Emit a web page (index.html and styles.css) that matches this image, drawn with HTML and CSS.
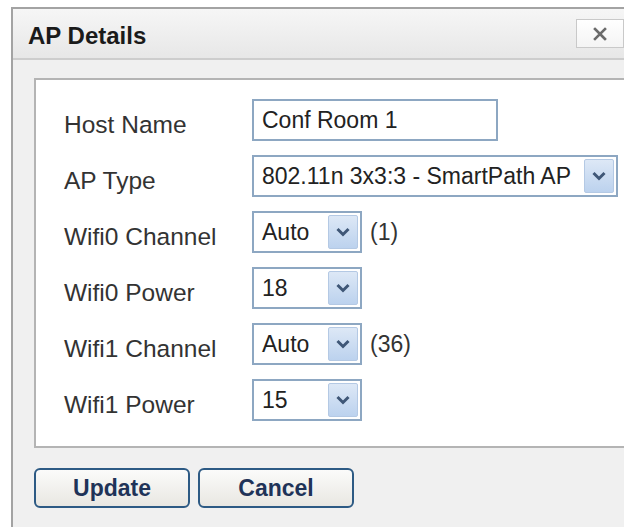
FILE: index.html
```html
<!DOCTYPE html>
<html lang="en">
<head>
<meta charset="utf-8">
<title>AP Details</title>
<link rel="stylesheet" href="styles.css">
</head>
<body>
<div class="dialog">
  <div class="dialog-header">
    <span class="dialog-title">AP Details</span>
    <button class="close-btn" type="button" aria-label="Close">
      <svg width="14" height="14" viewBox="0 0 14 14"><path d="M2 2 L12 12 M12 2 L2 12" stroke="#6b6b6b" stroke-width="2.6" stroke-linecap="square"/></svg>
    </button>
  </div>
  <div class="dialog-body">
    <div class="panel">
      <div class="row">
        <span class="label">Host Name</span>
        <div class="field text-field">Conf Room 1</div>
      </div>
      <div class="row">
        <span class="label">AP Type</span>
        <div class="field select wide">
          <span class="value">802.11n 3x3:3 - SmartPath AP</span>
          <span class="arrow"><svg width="16" height="10" viewBox="0 0 16 10"><path d="M2.5 2 L8 7.5 L13.5 2" fill="none" stroke="#3f5777" stroke-width="3"/></svg></span>
        </div>
      </div>
      <div class="row">
        <span class="label">Wifi0 Channel</span>
        <div class="field select small">
          <span class="value">Auto</span>
          <span class="arrow"><svg width="16" height="10" viewBox="0 0 16 10"><path d="M2.5 2 L8 7.5 L13.5 2" fill="none" stroke="#3f5777" stroke-width="3"/></svg></span>
        </div>
        <span class="note">(1)</span>
      </div>
      <div class="row">
        <span class="label">Wifi0 Power</span>
        <div class="field select small">
          <span class="value">18</span>
          <span class="arrow"><svg width="16" height="10" viewBox="0 0 16 10"><path d="M2.5 2 L8 7.5 L13.5 2" fill="none" stroke="#3f5777" stroke-width="3"/></svg></span>
        </div>
      </div>
      <div class="row">
        <span class="label">Wifi1 Channel</span>
        <div class="field select small">
          <span class="value">Auto</span>
          <span class="arrow"><svg width="16" height="10" viewBox="0 0 16 10"><path d="M2.5 2 L8 7.5 L13.5 2" fill="none" stroke="#3f5777" stroke-width="3"/></svg></span>
        </div>
        <span class="note">(36)</span>
      </div>
      <div class="row">
        <span class="label">Wifi1 Power</span>
        <div class="field select small">
          <span class="value">15</span>
          <span class="arrow"><svg width="16" height="10" viewBox="0 0 16 10"><path d="M2.5 2 L8 7.5 L13.5 2" fill="none" stroke="#3f5777" stroke-width="3"/></svg></span>
        </div>
      </div>
    </div>
    <div class="actions">
      <button class="btn" type="button">Update</button>
      <button class="btn" type="button">Cancel</button>
    </div>
  </div>
</div>
</body>
</html>
```

FILE: styles.css
```css
html, body {
  margin: 0;
  padding: 0;
  background: #ffffff;
  overflow: hidden;
}

body {
  font-family: "Liberation Sans", Arial, sans-serif;
  font-size: 23px;
  color: #222;
  padding: 7px 0 0 11px;
}

.dialog {
  width: 640px;
  height: 540px;
  border-left: 2px solid #a3a3a3;
  border-top: 2px solid #a3a3a3;
  background: #f0f0f0;
}

.dialog-header {
  height: 49px;
  display: flex;
  align-items: center;
  padding-left: 15px;
  background: linear-gradient(#f6f6f6, #e7e7e7);
  border-bottom: 2px solid #cdcdcd;
}

.dialog-title {
  font-weight: bold;
  font-size: 24px;
  color: #1a1a1a;
  flex: 1;
  padding-top: 4px;
}

.close-btn {
  width: 48px;
  height: 29px;
  margin-right: 29px;
  padding: 0;
  border: 1px solid #c9c9c9;
  background: linear-gradient(#ffffff, #f4f4f4);
  display: flex;
  align-items: center;
  justify-content: center;
}

.dialog-body {
  padding: 18px 0 0 21px;
}

.panel {
  width: 584px;
  border: 2px solid #b4b4b4;
  background: #ffffff;
  padding: 19px 0 25px 28px;
  display: flex;
  flex-direction: column;
  gap: 14px;
}

.row {
  display: flex;
  align-items: center;
  height: 42px;
}

.label {
  width: 188px;
  font-size: 24.5px;
  color: #333;
  padding-top: 10px;
}

.field {
  box-sizing: border-box;
  height: 42px;
  border: 2px solid #8da7c2;
  background: #fff;
  display: flex;
  align-items: center;
}

.text-field {
  width: 246px;
  padding-left: 8px;
}

.select .value {
  padding-left: 8px;
  flex: 1;
  white-space: nowrap;
}

.select.wide {
  width: 366px;
}

.select.small {
  width: 110px;
}

.arrow {
  width: 30px;
  height: 34px;
  margin-right: 2px;
  box-sizing: border-box;
  border: 1px solid #b4c9e4;
  border-radius: 2px;
  background: linear-gradient(#dde8f6, #bcd2ee);
  display: flex;
  align-items: center;
  justify-content: center;
}

.note {
  margin-left: 8px;
  color: #333;
}

.actions {
  display: flex;
  gap: 8px;
  margin-top: 20px;
}

.btn {
  width: 156px;
  height: 40px;
  border: 2px solid #2d5a84;
  border-radius: 6px;
  background: linear-gradient(#fbfbfa, #e9e7e2);
  font-family: "Liberation Sans", Arial, sans-serif;
  font-weight: bold;
  font-size: 23px;
  color: #1f3358;
  padding: 0;
}
```
